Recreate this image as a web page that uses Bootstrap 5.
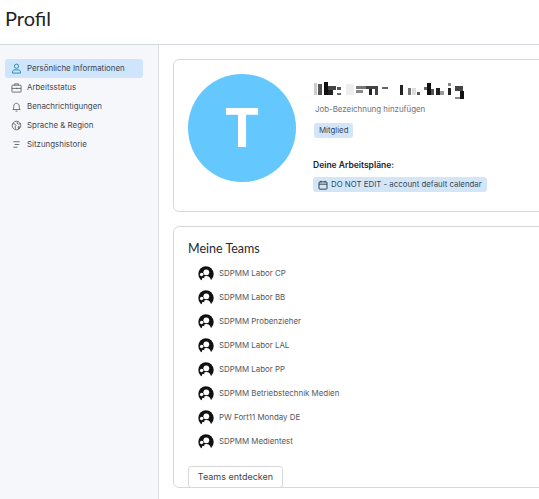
<!DOCTYPE html>
<html lang="de">
<head>
<meta charset="utf-8">
<title>Profil</title>
<link href="https://cdn.jsdelivr.net/npm/bootstrap@5.3.0/dist/css/bootstrap.min.css" rel="stylesheet">
<style>
html,body{height:100%;overflow:hidden}
body{font-family:Inter,"Liberation Sans",sans-serif;color:#212529;background:#fff}
.shell{height:499px;width:539px;overflow:hidden}
.topbar{height:45px;border-bottom:1px solid #d5d9df;padding-left:5px}
.topbar h1{font-family:Lato,sans-serif;font-size:20px;font-weight:400;line-height:36px;margin:0;color:#1f2328}
.side{width:159px;flex:none;background:#f5f7fb;border-right:1px solid #d9dde3;padding:14px 15px 0 5px}
.side-item{height:19px;font-size:7.900px;color:#44484f;padding-left:6px;gap:5px;border-radius:3px;white-space:nowrap}
.side-item svg{width:11px;height:11px;flex:none}
.side-item.on{background:#cfe5fb;color:#3a4654}
.main{padding:14px 0 0 14px;flex:1;min-width:0}
.box{width:400px;border:1px solid #d6d8dc;border-radius:6px;background:#fff}
.box-a{height:153px;padding:14px 14px 0;gap:17px;margin-bottom:14px}
.box-b{height:262px;padding:14px 14px 0;overflow:hidden}
.avatar{width:108px;height:108px;border-radius:50%;background:#64c7fd;color:#fff;font-size:54px;font-weight:700;line-height:1;flex:none}
.who{padding-top:5px}
.who svg.mosaic{display:block;margin-left:-1px}
.job{font-size:7.900px;color:#6e7278;margin:0 0 0 2px;line-height:12px}
.tag{display:flex;width:fit-content;align-items:center;background:#d3e6f8;border-radius:3px;font-size:7.850px;color:#33475b;height:15px;padding:0 5px;gap:3px;white-space:nowrap}
.tag-first{margin:8px 0 0 1px}
.plans{font-size:8.500px;font-weight:600;color:#212529;margin:21px 0 6px;line-height:12px}
.box-b h2{font-family:Lato,sans-serif;font-size:12.500px;font-weight:400;margin:0 0 5px;line-height:16px;color:#26292d}
.team{height:24px;padding-left:10px;gap:5px;font-size:7.900px;color:#55585e}
.team svg{width:16px;height:16px;flex:none}
.find{font-size:9px;color:#43474d;border:1px solid #d6d8dc;border-radius:3px;background:#fff;width:95px;height:22px;padding:0;margin-top:12px;display:block;line-height:14px}
</style>
</head>
<body>
<div class="shell d-flex flex-column">
  <header class="topbar"><h1>Profil</h1></header>
  <div class="d-flex flex-grow-1">
    <nav class="side">
      <div class="side-item on d-flex align-items-center"><svg viewBox="0 0 12 12" fill="none" stroke="#1d86b8" stroke-width="1"><circle cx="6" cy="3.500" r="2.300"/><path d="M1.700 11V9.800c0-1.500 1.200-2.300 2.600-2.300h3.400c1.400 0 2.600.8 2.600 2.300V11z"/></svg>Persönliche Informationen</div>
      <div class="side-item d-flex align-items-center"><svg viewBox="0 0 12 12" fill="none" stroke="#55585e" stroke-width=".9"><rect x="1" y="3.500" width="10" height="7.500" rx=".6"/><path d="M4 3.500V2h4v1.500M1 7h10M6 6.300v1.400"/></svg>Arbeitsstatus</div>
      <div class="side-item d-flex align-items-center"><svg viewBox="0 0 12 12" fill="none" stroke="#55585e" stroke-width=".9"><path d="M2 9.300c1-.9 1-2 1-3.500C3 3.800 4.300 2.500 6 2.500s3 1.300 3 3.300c0 1.500 0 2.600 1 3.500zM5 11h2"/></svg>Benachrichtigungen</div>
      <div class="side-item d-flex align-items-center"><svg viewBox="0 0 12 12" fill="none" stroke="#55585e" stroke-width=".9"><circle cx="6" cy="6" r="4.700"/><path d="M2 4l2.500.5 1 1.500-1 1.500.5 2M7 1.800L6.500 3.500 8 4.500l2.500-.5M8 7l1.500.5L8 9.800z"/></svg>Sprache &amp; Region</div>
      <div class="side-item d-flex align-items-center"><svg viewBox="0 0 12 12" fill="none" stroke="#55585e" stroke-width=".9"><path d="M2.500 3h7M4 6h5M2.500 9h4.500"/></svg>Sitzungshistorie</div>
    </nav>
    <main class="main">
      <section class="box box-a d-flex">
        <div class="avatar d-flex align-items-center justify-content-center">T</div>
        <div class="who">
          <svg class="mosaic" width="156" height="24" viewBox="0 0 156 24" role="img" aria-label="Name unkenntlich gemacht">
            <g>
              <rect x="2" y="4" width="3" height="12" fill="#ccc"/><rect x="6" y="5" width="4" height="11" fill="#555"/><rect x="12" y="3" width="4" height="13" fill="#111"/><rect x="16" y="7" width="8" height="4" fill="#444"/><rect x="16" y="11" width="5" height="5" fill="#222"/><rect x="25" y="8" width="4" height="3" fill="#555"/><rect x="25" y="14" width="4" height="2" fill="#666"/><rect x="34" y="5" width="8" height="11" fill="#eee"/>
              <rect x="44" y="7" width="10" height="3" fill="#777"/><rect x="44" y="11" width="7" height="3" fill="#888"/><rect x="54" y="7" width="12" height="3" fill="#444"/><rect x="57" y="10" width="3" height="6" fill="#222"/><rect x="63" y="10" width="3" height="6" fill="#444"/><rect x="70" y="8" width="6" height="2" fill="#666"/>
              <rect x="88" y="6" width="3" height="10" fill="#222"/><rect x="96" y="9" width="3" height="7" fill="#777"/><rect x="100" y="9" width="4" height="7" fill="#ddd"/><rect x="105" y="13" width="3" height="3" fill="#555"/><rect x="112" y="8" width="3" height="3" fill="#666"/><rect x="115" y="4" width="4" height="12" fill="#111"/><rect x="119" y="10" width="3" height="6" fill="#555"/><rect x="124" y="9" width="4" height="7" fill="#222"/><rect x="128" y="12" width="4" height="4" fill="#999"/><rect x="136" y="4" width="3" height="3" fill="#888"/><rect x="136" y="9" width="3" height="7" fill="#222"/><rect x="143" y="7" width="8" height="5" fill="#444"/><rect x="148" y="12" width="4" height="8" fill="#111"/><rect x="143" y="18" width="5" height="2" fill="#888"/>
            </g>
          </svg>
          <div class="job">Job-Bezeichnung hinzufügen</div>
          <span class="tag tag-first">Mitglied</span>
          <div class="plans">Deine Arbeitspläne:</div>
          <span class="tag"><svg width="10" height="10" viewBox="0 0 12 12" fill="none" stroke="#2b3440" stroke-width="1.100"><rect x="1.200" y="2.200" width="9.600" height="8.800" rx="1"/><path d="M1.200 5h9.600M3.500 1v2M8.500 1v2"/></svg>DO NOT EDIT - account default calendar</span>
        </div>
      </section>
      <section class="box box-b">
        <h2>Meine Teams</h2>
        <div class="team d-flex align-items-center"><svg viewBox="0 0 16 16"><use href="#grp"/></svg>SDPMM Labor CP</div>
        <div class="team d-flex align-items-center"><svg viewBox="0 0 16 16"><use href="#grp"/></svg>SDPMM Labor BB</div>
        <div class="team d-flex align-items-center"><svg viewBox="0 0 16 16"><use href="#grp"/></svg>SDPMM Probenzieher</div>
        <div class="team d-flex align-items-center"><svg viewBox="0 0 16 16"><use href="#grp"/></svg>SDPMM Labor LAL</div>
        <div class="team d-flex align-items-center"><svg viewBox="0 0 16 16"><use href="#grp"/></svg>SDPMM Labor PP</div>
        <div class="team d-flex align-items-center"><svg viewBox="0 0 16 16"><use href="#grp"/></svg>SDPMM Betriebstechnik Medien</div>
        <div class="team d-flex align-items-center"><svg viewBox="0 0 16 16"><use href="#grp"/></svg>PW Fort11 Monday DE</div>
        <div class="team d-flex align-items-center"><svg viewBox="0 0 16 16"><use href="#grp"/></svg>SDPMM Medientest</div>
        <button class="find" type="button">Teams entdecken</button>
      </section>
    </main>
  </div>
</div>
<svg width="0" height="0" class="position-absolute">
  <defs>
    <g id="grp">
      <circle cx="8" cy="8" r="7.700" fill="#111"/>
      <circle cx="8.300" cy="6.300" r="2.900" fill="#fff"/>
      <circle cx="3.700" cy="8.500" r="1.800" fill="#fff"/>
      <path d="M3.500 15c.3-3.200 2.200-5 4.800-5s4.500 1.800 4.800 5c-1.300.8-3 1.200-4.800 1.200s-3.500-.4-4.800-1.200z" fill="#fff"/>
      <circle cx="5.300" cy="10.800" r="1.200" fill="#111"/>
    </g>
  </defs>
</svg>
</body>
</html>
